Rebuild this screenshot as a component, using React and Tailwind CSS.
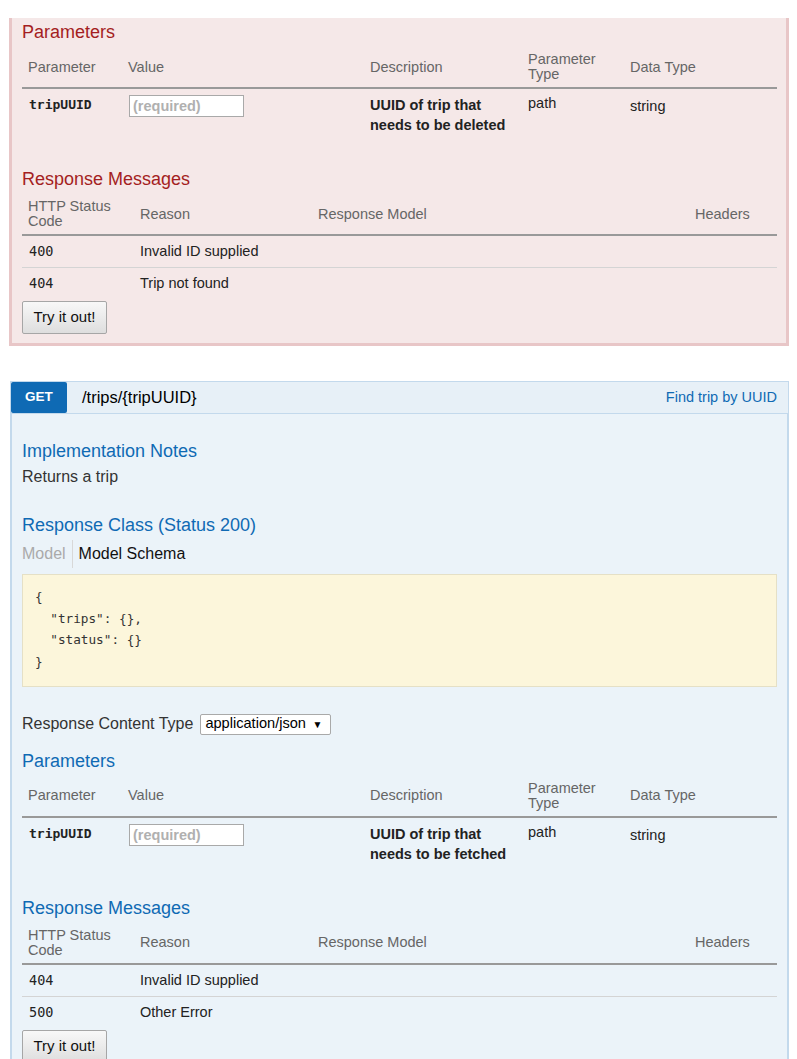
import React from "react";

// Tabla de parametros (cabecera + una fila)
function ParamsTable({ description }) {
  return (
    <div className="text-[14.5px]">
      <div className="grid grid-cols-[100px_242px_158px_102px_1fr] items-center pt-[10px] pb-[5px] leading-[15px] text-[#666] border-b-2 border-[#999]">
        <div className="px-[6px]">Parameter</div>
        <div className="px-[6px]">Value</div>
        <div className="px-[6px]">Description</div>
        <div className="px-[6px]">Parameter Type</div>
        <div className="px-[6px]">Data Type</div>
      </div>
      <div className="grid grid-cols-[100px_242px_158px_102px_1fr] items-start pt-[6px] pb-[6px] leading-[20px] text-[#222]">
        <div className="px-[7px] font-['DejaVu_Sans_Mono',monospace] font-bold text-[13px]">tripUUID</div>
        <div className="px-[6px]">
          <input
            readOnly
            placeholder="(required)"
            className="ml-[1px] w-[115px] h-[22px] border border-[#a9a9a9] bg-white px-[3px] text-[14.5px] font-bold placeholder:text-[#b0b0b0] outline-none"
          />
        </div>
        <div className="px-[6px] font-bold">{description}</div>
        <div className="px-[6px] -mt-[2px]">path</div>
        <div className="px-[6px] mt-[1px]">string</div>
      </div>
    </div>
  );
}

// Tabla de mensajes de respuesta
function ResponseTable({ rows }) {
  return (
    <div className="text-[14.5px]">
      <div className="grid grid-cols-[112px_178px_377px_1fr] items-center pt-[10px] pb-[5px] leading-[15px] text-[#666] border-b-2 border-[#999]">
        <div className="px-[6px]">HTTP Status Code</div>
        <div className="px-[6px]">Reason</div>
        <div className="px-[6px]">Response Model</div>
        <div className="px-[6px]">Headers</div>
      </div>
      {rows.map((row, index) => (
        <div
          key={index}
          className={
            "grid grid-cols-[112px_178px_377px_1fr] pt-[5px] leading-[20px] text-[#222] " +
            (index < rows.length - 1 ? "pb-[6px] border-b border-[#d4d4d4]" : "pb-[7px]")
          }
        >
          <div className="px-[7px] font-['DejaVu_Sans_Mono',monospace] text-[13.5px]">{row.code}</div>
          <div className="px-[6px]">{row.reason}</div>
          <div className="px-[6px]"></div>
          <div className="px-[6px]"></div>
        </div>
      ))}
    </div>
  );
}

function TryButton() {
  return (
    <button className="mt-[1px] h-[33px] w-[85px] rounded-[2px] border border-[#a6a6a6] bg-linear-to-b from-[#f8f8f8] to-[#dedede] text-[15px] text-[#111]">
      Try it out!
    </button>
  );
}

export default function App() {
  return (
    <div className="min-h-screen bg-white pt-[18px] font-['Liberation_Sans',Arial,sans-serif]">
      {/* Operacion DELETE (parte inferior) */}
      <div className="ml-[9px] w-[780px] bg-[#f5e8e8] border-x-[3px] border-b-[3px] border-[#e8c6c7] pl-[10px] pr-[9px] pt-[4px] pb-[9px]">
        <h4 className="text-[18px] leading-[20px] text-[#a41e22]">Parameters</h4>
        <ParamsTable description="UUID of trip that needs to be deleted" />
        <h4 className="mt-[28px] text-[18px] leading-[20px] text-[#a41e22]">Response Messages</h4>
        <ResponseTable
          rows={[
            { code: "400", reason: "Invalid ID supplied" },
            { code: "404", reason: "Trip not found" },
          ]}
        />
        <TryButton />
      </div>

      {/* Operacion GET */}
      <div className="ml-[10px] mt-[35px] w-[779px]">
        <div className="flex h-[33px] items-stretch border border-[#c3d9ec] bg-[#e7f0f7]">
          <div className="flex w-[56px] items-center justify-center rounded-[2px] bg-[#0f6ab4] text-[13.5px] font-bold text-white">
            GET
          </div>
          <div className="ml-[15px] flex items-center text-[16.5px] text-black">/trips/&#123;tripUUID&#125;</div>
          <div className="ml-auto flex items-center pr-[11px] text-[14.5px] text-[#0f6ab4]">Find trip by UUID</div>
        </div>
        <div className="border-x-2 border-b-2 border-[#c3d9ec] bg-[#ebf3f9] px-[10px] pt-[27px] pb-[12px]">
          <h4 className="text-[18px] leading-[20px] text-[#0f6ab4]">Implementation Notes</h4>
          <p className="mt-[6px] text-[16px] leading-[20px] text-[#333]">Returns a trip</p>

          <h4 className="mt-[28px] text-[18px] leading-[20px] text-[#0f6ab4]">Response Class (Status 200)</h4>
          <div className="mt-[5px] flex h-[28px] text-[16px]">
            <div className="flex items-center pr-[6px] text-[#aaa]">Model</div>
            <div className="flex items-center border-l border-[#d8d8d8] pl-[6px] text-[#111]">Model Schema</div>
          </div>
          <div className="mt-[6px] border border-[#e5e0c6] bg-[#fcf6db] pl-[12px] pt-[11px] pb-[13px]">
            <pre className="font-['DejaVu_Sans_Mono',monospace] text-[12.7px] leading-[21.67px] text-[#333]">
{`{
  "trips": {},
  "status": {}
}`}
            </pre>
          </div>

          <div className="mt-[27px] flex h-[21px] items-center text-[16px] text-[#333]">
            <span>Response Content Type</span>
            <div className="ml-[7px] flex h-[21px] w-[131px] items-center rounded-[2px] border border-[#a9a9a9] bg-white pl-[4px] text-[14.6px] text-black">
              <span>application/json</span>
              <span className="ml-auto mr-[8px] text-[10px]">▼</span>
            </div>
          </div>

          <h4 className="mt-[16px] text-[18px] leading-[20px] text-[#0f6ab4]">Parameters</h4>
          <ParamsTable description="UUID of trip that needs to be fetched" />
          <h4 className="mt-[28px] text-[18px] leading-[20px] text-[#0f6ab4]">Response Messages</h4>
          <ResponseTable
            rows={[
              { code: "404", reason: "Invalid ID supplied" },
              { code: "500", reason: "Other Error" },
            ]}
          />
          <TryButton />
        </div>
      </div>
    </div>
  );
}
